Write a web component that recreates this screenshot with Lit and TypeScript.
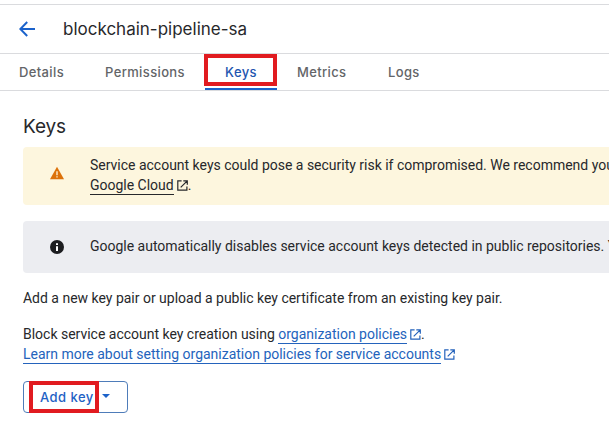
import { LitElement, html, css, svg } from "lit";
import { customElement, property } from "lit/decorators.js";

@customElement("external-icon")
class ExternalIcon extends LitElement {
  static styles = css`
    :host { display: inline-block; width: 11px; height: 11px; }
    svg { display: block; }
  `;
  render() {
    return html`<svg width="11" height="11" viewBox="0 0 11 11" fill="none" stroke="currentColor" stroke-width="1.2">
      <path d="M4.6 .8H.8v9.4h9.1V6.4M6.3 .8h4v4M10 1.1L3.7 7.4" />
    </svg>`;
  }
}

@customElement("notice-bar")
class NoticeBar extends LitElement {
  @property({ reflect: true }) kind = "info";
  static styles = css`
    :host {
      display: flex; align-items: center; box-sizing: border-box;
      width: 700px; border-radius: 4px; background: #ecedf1; height: 52px;
    }
    :host([kind="warning"]) { background: #fdf6de; height: 58px; }
    .icon { width: 14px; height: 14px; margin: 0 26px 0 27px; flex: none; }
    .icon svg { display: block; }
    .text { white-space: nowrap; margin-top: -2px; }
    :host([kind="warning"]) .icon { margin-top: -6px; }
  `;
  render() {
    const icon = this.kind === "warning"
      ? svg`<path d="M7 .8L14 13.2H0z" fill="#dc7109"/><path d="M7 5.2v4M7 10.2v1.4" stroke="#fdf6de" stroke-width="1.3"/>`
      : svg`<circle cx="7" cy="7" r="7" fill="#1c1d20"/><path d="M7 3.2v1.8M7 6.2v4.8" stroke="#fff" stroke-width="2"/>`;
    return html`<div class="icon"><svg width="14" height="14" viewBox="0 0 14 14">${icon}</svg></div>
      <div class="text"><slot></slot></div>`;
  }
}

@customElement("app-root")
class AppRoot extends LitElement {
  static styles = css`
    :host {
      display: block; box-sizing: border-box; width: 609px; height: 428px; overflow: hidden;
      padding-top: 4px; background: #fff; color: #27282b;
      font: 14px/20px Roboto, sans-serif; letter-spacing: -.01px;
    }
    .header {
      display: flex; align-items: center; box-sizing: border-box; height: 50px;
      border: solid #dadbde; border-width: 1px 0; padding-left: 19px;
    }
    .back { display: block; width: 16px; height: 16px; margin-right: 28px; }
    .title { font: 17px/24px Inter, sans-serif; letter-spacing: 0; }
    .tabs {
      display: flex; box-sizing: border-box; height: 37px; border-bottom: 1px solid #dadbde;
      font: 500 13px/36px Inter, sans-serif; color: #636568; letter-spacing: .37px;
    }
    .tab { position: relative; white-space: nowrap; }
    .details { margin-left: 19px; width: 86px; }
    .permissions { width: 100px; }
    .keys { width: 72px; text-align: center; color: #1f56b0; box-shadow: inset 0 -2px #1c62c9; }
    .metrics { margin-left: 20px; width: 91px; }
    .mark { position: absolute; box-sizing: border-box; border: 4px solid #e11b20; }
    .mark-tab { left: -1px; top: 0; width: 73px; height: 32px; }
    .mark-button { left: 5px; top: -1px; width: 70px; height: 32px; }
    .content { padding: 24px 0 0 23px; }
    .heading { margin: 0 0 8px; font: 400 19px/24px Inter, sans-serif; letter-spacing: -.1px; }
    .info { margin-top: 16px; }
    .para { margin-top: 15px; white-space: nowrap; }
    .policy { margin-top: 16px; }
    .link { display: inline-block; height: 19px; border-bottom: 1px solid currentColor; vertical-align: top; }
    .blue { color: #2463bc; }
    external-icon { margin-left: 3px; vertical-align: -1px; }
    .add {
      position: relative; display: flex; align-items: center; box-sizing: border-box;
      width: 105px; height: 32px; margin-top: 17px; padding-left: 16px;
      border: 1px solid #4e7cb9; border-radius: 4px; color: #1f62c5;
      font: 500 13px/20px Inter, sans-serif; letter-spacing: .45px;
    }
    .label { width: 62px; white-space: nowrap; }
    .caret { border: 4px solid transparent; border-top-color: #1c62c9; border-bottom: 0; margin-top: -3px; }
  `;
  render() {
    return html`
      <div class="header">
        <svg class="back" viewBox="0 0 16 16" fill="none" stroke="#1b62cb" stroke-width="2"><path d="M16 8H1.6M8.2 1L1.3 8l6.9 7" /></svg>
        <div class="title">blockchain-pipeline-sa</div>
      </div>
      <div class="tabs">
        <div class="tab details">Details</div>
        <div class="tab permissions">Permissions</div>
        <div class="tab keys">Keys<span class="mark mark-tab"></span></div>
        <div class="tab metrics">Metrics</div>
        <div class="tab">Logs</div>
      </div>
      <div class="content">
        <h2 class="heading">Keys</h2>
        <notice-bar kind="warning">Service account keys could pose a security risk if compromised. We recommend you<br /><span class="link">Google Cloud</span><external-icon></external-icon>.</notice-bar>
        <notice-bar class="info">Google automatically disables service account keys detected in public repositories. You</notice-bar>
        <div class="para">Add a new key pair or upload a public key certificate from an existing key pair.</div>
        <div class="para policy">Block service account key creation using <span class="link blue">organization policies</span><external-icon class="blue"></external-icon>.<br /><span class="link blue">Learn more about setting organization policies for service accounts</span><external-icon class="blue"></external-icon></div>
        <div class="add"><span class="label">Add key</span><span class="caret"></span><span class="mark mark-button"></span></div>
      </div>
    `;
  }
}
